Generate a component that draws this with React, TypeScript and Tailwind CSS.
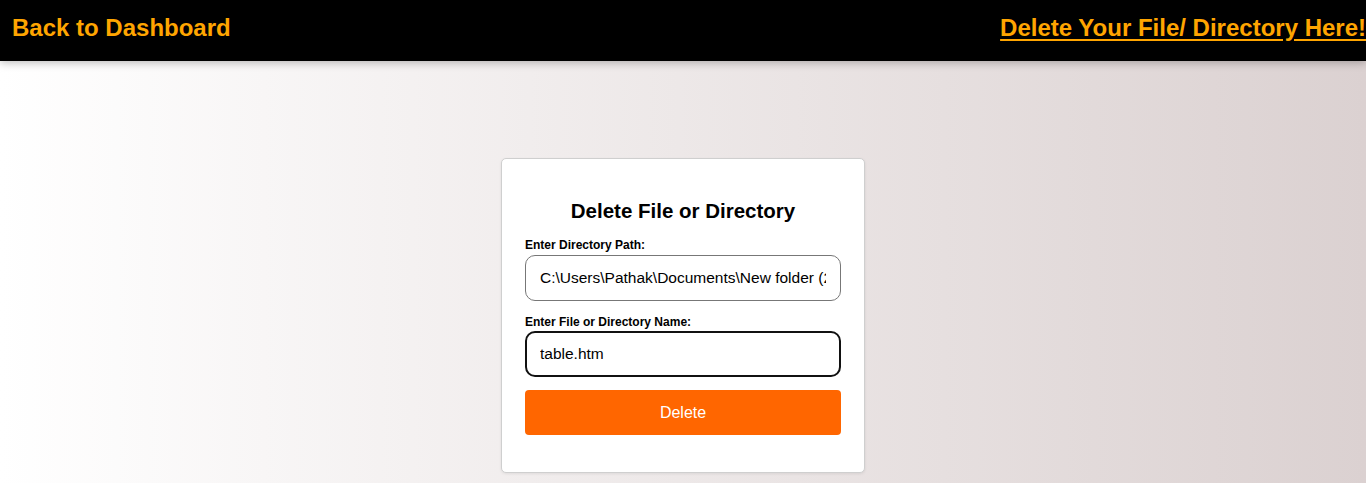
import { useState } from "react";

export default function App() {
  const [path, setPath] = useState("C:\\Users\\Pathak\\Documents\\New folder (2)");
  const [name, setName] = useState("table.htm");

  return (
    <div className="min-h-[483px] bg-gradient-to-r from-white to-[#dbd1d1] font-['Liberation_Sans',Arial,sans-serif]">
      <nav className="relative z-10 flex h-[61px] items-center justify-between bg-black pl-3 pr-0 pb-[6px] shadow-[0_2px_8px_rgba(0,0,0,0.25)]">
        <a href="#" className="text-[24px] font-bold text-[#ffa500]">
          Back to Dashboard
        </a>
        <a href="#" className="text-[24px] font-bold text-[#ffa500] underline underline-offset-[3px]">
          Delete Your File/ Directory Here!
        </a>
      </nav>

      <div className="flex justify-center pt-[97px]">
        <div className="w-[364px] rounded-[5px] border border-[#cfcfcf] bg-white px-[23px] pt-[40px] pb-[37px] shadow-[0_1px_3px_rgba(0,0,0,0.08)]">
          <h2 className="text-center text-[20.5px] leading-[23px] font-bold text-black">
            Delete File or Directory
          </h2>
          <label className="mt-[16px] block text-[12px] leading-[14px] font-bold text-black">
            Enter Directory Path:
          </label>
          <input
            value={path}
            onChange={(e) => setPath(e.target.value)}
            className="mt-[3px] h-[46px] w-full rounded-[10px] border border-[#777] bg-white px-[14px] text-[15.5px] text-black outline-none"
          />
          <label className="mt-[14px] block text-[12px] leading-[14px] font-bold text-black">
            Enter File or Directory Name:
          </label>
          <input
            value={name}
            onChange={(e) => setName(e.target.value)}
            className="mt-[2px] h-[46px] w-full rounded-[10px] border-2 border-[#111] bg-white px-[13px] text-[15.5px] text-black outline-none"
          />
          <button className="mt-[13px] h-[45px] w-full rounded-[4px] bg-[#ff6600] text-[16px] text-white">
            Delete
          </button>
        </div>
      </div>
    </div>
  );
}
